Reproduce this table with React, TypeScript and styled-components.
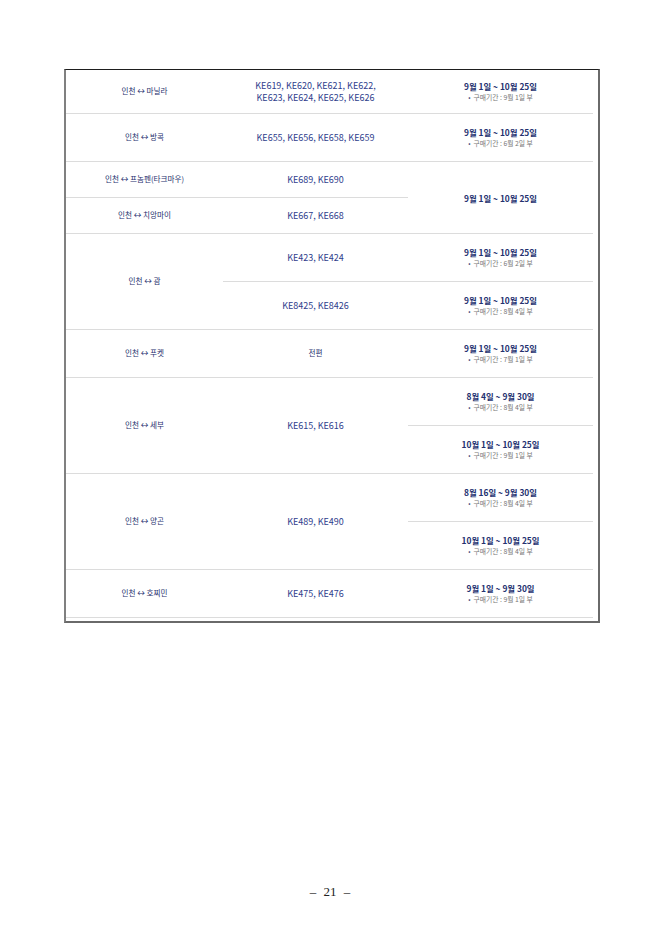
import React from "react";
import styled, { createGlobalStyle } from "styled-components";

const Global = createGlobalStyle`
  html, body { margin: 0; padding: 0; background: #ffffff; }
  body { width: 660px; height: 933px; overflow: hidden; }
`;

const Page = styled.div`
  width: 660px;
  height: 933px;
  display: flex;
  flex-direction: column;
  padding: 69px 0 0 64px;
  box-sizing: border-box;
  font-family: "Noto Sans CJK KR", "Noto Sans", sans-serif;
`;

const Frame = styled.div`
  width: 536px;
  box-sizing: border-box;
  border-top: 1px solid #1e1e1e;
  border-left: 2px solid #808080;
  border-right: 2px solid #6a6a6a;
  border-bottom: 2px solid #6a6a6a;
  padding: 0 4px 3px 0;
`;

const Table = styled.div`
  display: grid;
  grid-template-columns: 157px 185px 185px;
  grid-template-rows: 44px 48px 36px 36px repeat(8, 48px);
`;

const Cell = styled.div<{ $span?: number }>`
  grid-row: span ${(p) => p.$span ?? 1};
  display: flex;
  flex-direction: column;
  align-items: center;
  justify-content: center;
  box-sizing: border-box;
  border-bottom: 1px solid #dcdcdc;
  text-align: center;
`;

const Route = styled.span`
  font-size: 7.6px;
  line-height: 10px;
  font-weight: 400;
  color: #26306e;
  white-space: nowrap;
  margin-top: -2px;
`;

const Flights = styled.span`
  font-size: 9px;
  line-height: 12px;
  color: #2e3d8c;
  white-space: nowrap;
`;

const DateText = styled.span`
  font-size: 8.4px;
  font-weight: 700;
  line-height: 12px;
  color: #24316f;
  white-space: nowrap;
`;

const Note = styled.span`
  font-size: 6.8px;
  line-height: 11px;
  color: #777777;
  white-space: nowrap;
  &::before {
    content: "•";
    color: #3a4276;
    margin-right: 3px;
  }
`;

const Footer = styled.div`
  margin-top: 261px;
  width: 532px;
  text-align: center;
  font-family: "Liberation Serif", "DejaVu Serif", serif;
  font-size: 13px;
  line-height: 15px;
  color: #222;
  word-spacing: 4px;
`;

type DateInfo = { date: string; note?: string };

const DateCell: React.FC<{ d: DateInfo; span?: number }> = ({ d, span }) => (
  <Cell $span={span}>
    <DateText>{d.date}</DateText>
    {d.note && <Note>{d.note}</Note>}
  </Cell>
);

export default function App() {
  return (
    <>
      <Global />
      <Page>
        <Frame>
          <Table>
            {/* 마닐라 */}
            <Cell><Route>인천 ↔ 마닐라</Route></Cell>
            <Cell>
              <Flights>KE619, KE620, KE621, KE622,</Flights>
              <Flights>KE623, KE624, KE625, KE626</Flights>
            </Cell>
            <DateCell d={{ date: "9월 1일 ~ 10월 25일", note: "구매기간 : 9월 1일 부" }} />

            {/* 방콕 */}
            <Cell><Route>인천 ↔ 방콕</Route></Cell>
            <Cell><Flights>KE655, KE656, KE658, KE659</Flights></Cell>
            <DateCell d={{ date: "9월 1일 ~ 10월 25일", note: "구매기간 : 6월 2일 부" }} />

            {/* 프놈펜 / 치앙마이 */}
            <Cell><Route>인천 ↔ 프놈펜(타크마우)</Route></Cell>
            <Cell><Flights>KE689, KE690</Flights></Cell>
            <DateCell span={2} d={{ date: "9월 1일 ~ 10월 25일" }} />
            <Cell><Route>인천 ↔ 치앙마이</Route></Cell>
            <Cell><Flights>KE667, KE668</Flights></Cell>

            {/* 괌 */}
            <Cell $span={2}><Route>인천 ↔ 괌</Route></Cell>
            <Cell><Flights>KE423, KE424</Flights></Cell>
            <DateCell d={{ date: "9월 1일 ~ 10월 25일", note: "구매기간 : 6월 2일 부" }} />
            <Cell><Flights>KE8425, KE8426</Flights></Cell>
            <DateCell d={{ date: "9월 1일 ~ 10월 25일", note: "구매기간 : 8월 4일 부" }} />

            {/* 푸켓 */}
            <Cell><Route>인천 ↔ 푸켓</Route></Cell>
            <Cell><Route>전편</Route></Cell>
            <DateCell d={{ date: "9월 1일 ~ 10월 25일", note: "구매기간 : 7월 1일 부" }} />

            {/* 세부 */}
            <Cell $span={2}><Route>인천 ↔ 세부</Route></Cell>
            <Cell $span={2}><Flights>KE615, KE616</Flights></Cell>
            <DateCell d={{ date: "8월 4일 ~ 9월 30일", note: "구매기간 : 8월 4일 부" }} />
            <DateCell d={{ date: "10월 1일 ~ 10월 25일", note: "구매기간 : 9월 1일 부" }} />

            {/* 양곤 */}
            <Cell $span={2}><Route>인천 ↔ 양곤</Route></Cell>
            <Cell $span={2}><Flights>KE489, KE490</Flights></Cell>
            <DateCell d={{ date: "8월 16일 ~ 9월 30일", note: "구매기간 : 8월 4일 부" }} />
            <DateCell d={{ date: "10월 1일 ~ 10월 25일", note: "구매기간 : 8월 4일 부" }} />

            {/* 호찌민 */}
            <Cell><Route>인천 ↔ 호찌민</Route></Cell>
            <Cell><Flights>KE475, KE476</Flights></Cell>
            <DateCell d={{ date: "9월 1일 ~ 9월 30일", note: "구매기간 : 9월 1일 부" }} />
          </Table>
        </Frame>
        <Footer>– 21 –</Footer>
      </Page>
    </>
  );
}
